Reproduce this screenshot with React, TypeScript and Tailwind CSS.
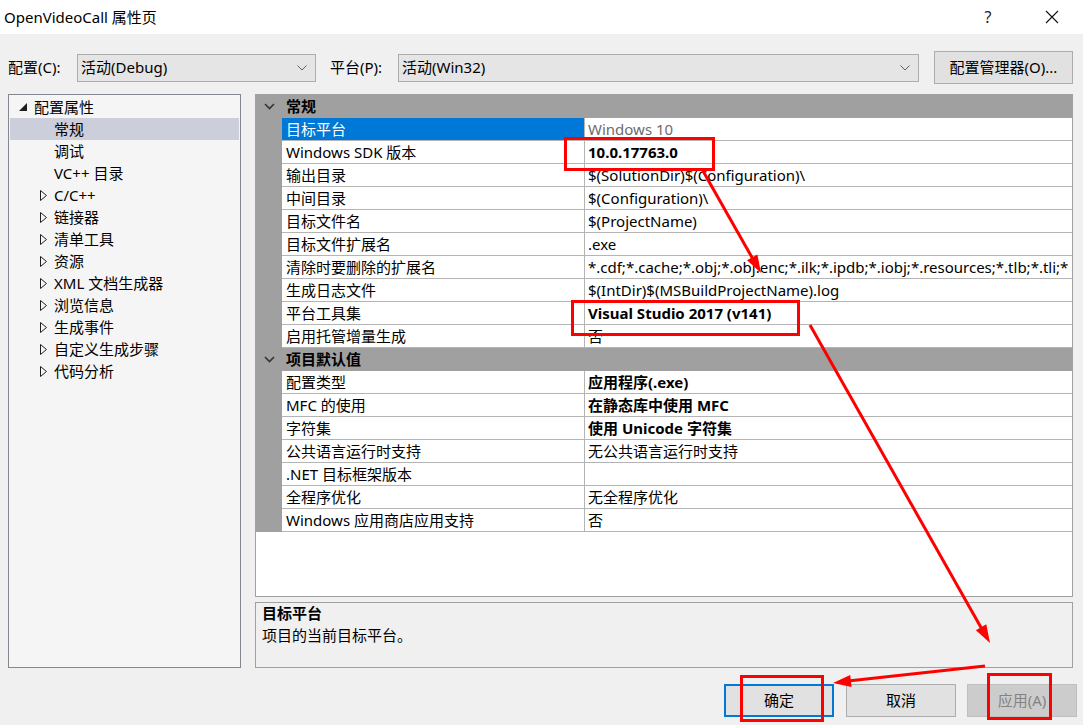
import React from "react"

const font = { fontFamily: '"Noto Sans", "Noto Sans CJK SC", sans-serif' }

type Row = { name: string; value: string; bold?: boolean; selected?: boolean; dim?: boolean }

const general: Row[] = [
  { name: "目标平台", value: "Windows 10", selected: true, dim: true },
  { name: "Windows SDK 版本", value: "10.0.17763.0", bold: true },
  { name: "输出目录", value: "$(SolutionDir)$(Configuration)\\" },
  { name: "中间目录", value: "$(Configuration)\\" },
  { name: "目标文件名", value: "$(ProjectName)" },
  { name: "目标文件扩展名", value: ".exe" },
  { name: "清除时要删除的扩展名", value: "*.cdf;*.cache;*.obj;*.obj.enc;*.ilk;*.ipdb;*.iobj;*.resources;*.tlb;*.tli;*" },
  { name: "生成日志文件", value: "$(IntDir)$(MSBuildProjectName).log" },
  { name: "平台工具集", value: "Visual Studio 2017 (v141)", bold: true },
  { name: "启用托管增量生成", value: "否" },
]

const defaults: Row[] = [
  { name: "配置类型", value: "应用程序(.exe)", bold: true },
  { name: "MFC 的使用", value: "在静态库中使用 MFC", bold: true },
  { name: "字符集", value: "使用 Unicode 字符集", bold: true },
  { name: "公共语言运行时支持", value: "无公共语言运行时支持" },
  { name: ".NET 目标框架版本", value: "" },
  { name: "全程序优化", value: "无全程序优化" },
  { name: "Windows 应用商店应用支持", value: "否" },
]

const tree: { label: string; level: 0 | 1; expandable?: boolean; selected?: boolean }[] = [
  { label: "配置属性", level: 0 },
  { label: "常规", level: 1, selected: true },
  { label: "调试", level: 1 },
  { label: "VC++ 目录", level: 1 },
  { label: "C/C++", level: 1, expandable: true },
  { label: "链接器", level: 1, expandable: true },
  { label: "清单工具", level: 1, expandable: true },
  { label: "资源", level: 1, expandable: true },
  { label: "XML 文档生成器", level: 1, expandable: true },
  { label: "浏览信息", level: 1, expandable: true },
  { label: "生成事件", level: 1, expandable: true },
  { label: "自定义生成步骤", level: 1, expandable: true },
  { label: "代码分析", level: 1, expandable: true },
]

function ComboArrow() {
  return (
    <svg width="10" height="6" viewBox="0 0 10 6" className="shrink-0">
      <polyline points="0.5,0.5 5,5 9.5,0.5" fill="none" stroke="#606060" strokeWidth="1" />
    </svg>
  )
}

function Combo({ text, w }: { text: string; w: string }) {
  return (
    <div className={`${w} shrink-0 h-[28px] border border-[#adadad] bg-[#e5e5e5] flex items-center justify-between pl-[3px] pr-[8px]`}>
      <span>{text}</span>
      <ComboArrow />
    </div>
  )
}

function Header({ title }: { title: string }) {
  return (
    <div className="h-[23px] bg-[#a0a0a0] flex items-center">
      <div className="w-[26px] flex justify-center">
        <svg width="11" height="7" viewBox="0 0 11 7">
          <polyline points="1,1 5.5,5.5 10,1" fill="none" stroke="#333" strokeWidth="1.6" />
        </svg>
      </div>
      <span className="pl-[4px] font-bold">{title}</span>
    </div>
  )
}

function PropRow({ r }: { r: Row }) {
  return (
    <div className="h-[23px] flex bg-[#a0a0a0]">
      <div className="w-[26px] shrink-0" />
      <div className="flex flex-1 border-b border-[#b4b4b4] bg-white min-w-0">
        <div className={`w-[303px] shrink-0 border-r border-[#b4b4b4] pl-[4px] flex items-center whitespace-nowrap ${r.selected ? "bg-[#0078d7] text-white" : ""}`}>
          {r.name}
        </div>
        <div className={`flex-1 min-w-0 pl-[3px] flex items-center whitespace-nowrap overflow-hidden ${r.bold ? "font-bold" : ""} ${r.dim ? "text-[#6d6d6d]" : ""}`}>
          {r.value}
        </div>
      </div>
    </div>
  )
}

export default function App() {
  return (
    <div className="relative w-[1083px] h-[725px] overflow-hidden bg-[#f0f0f0] text-[15px] text-black leading-none" style={font}>
      {/* title bar */}
      <div className="h-[34px] bg-white flex items-center">
        <span className="pl-[4px] flex-1">OpenVideoCall 属性页</span>
        <span className="w-[46px] text-center text-[16px] text-[#222]">?</span>
        <div className="w-[72px] flex justify-center pl-[10px]">
          <svg width="14" height="14" viewBox="0 0 14 14">
            <path d="M1 1 L13 13 M13 1 L1 13" stroke="#111" strokeWidth="1.1" />
          </svg>
        </div>
      </div>

      {/* config row */}
      <div className="mt-[17px] mb-[10px] h-[33px] flex items-center">
        <span className="w-[77px] shrink-0 pl-[8px]">配置(C):</span>
        <Combo text="活动(Debug)" w="w-[239px]" />
        <span className="w-[82px] shrink-0 pl-[14px]">平台(P):</span>
        <Combo text="活动(Win32)" w="w-[521px]" />
        <div className="ml-[15px] w-[139px] shrink-0 h-[33px] border border-[#adadad] bg-[#e1e1e1] flex items-center justify-center">
          配置管理器(O)...
        </div>
      </div>

      {/* main area */}
      <div className="flex pl-[8px] pr-[10px] gap-[14px] h-[574px]">
        <div className="w-[233px] shrink-0 border border-[#828790] bg-[#f5f5f5] pt-[1px]">
          {tree.map((t) => (
            <div key={t.label} className={`h-[22px] flex items-center mx-[1px] whitespace-nowrap ${t.selected ? "bg-[#cccedb]" : ""}`}>
              {t.level === 0 ? (
                <>
                  <svg width="9" height="9" viewBox="0 0 9 9" className="ml-[9px]">
                    <polygon points="8,0 8,8 0,8" fill="#1e1e1e" />
                  </svg>
                  <span className="ml-[6px]">{t.label}</span>
                </>
              ) : (
                <>
                  <div className="w-[44px] shrink-0 flex justify-end pr-[7px]">
                    {t.expandable && (
                      <svg width="7" height="11" viewBox="0 0 7 11">
                        <polygon points="0.5,0.5 6.5,5.5 0.5,10.5" fill="none" stroke="#1e1e1e" strokeWidth="1" />
                      </svg>
                    )}
                  </div>
                  <span>{t.label}</span>
                </>
              )}
            </div>
          ))}
        </div>

        <div className="flex-1 min-w-0 flex flex-col gap-[5px]">
          <div className="h-[503px] border border-[#a0a0a0] bg-white overflow-hidden">
            <Header title="常规" />
            {general.map((r) => <PropRow key={r.name} r={r} />)}
            <Header title="项目默认值" />
            {defaults.map((r) => <PropRow key={r.name} r={r} />)}
          </div>
          <div className="h-[66px] border border-[#a0a0a0] pl-[6px]">
            <div className="font-bold h-[20px] flex items-center">目标平台</div>
            <div className="h-[24px] flex items-center">项目的当前目标平台。</div>
          </div>
        </div>
      </div>

      {/* buttons */}
      <div className="mt-[16px] flex justify-end pr-[6px]">
        <div className="w-[110px] h-[33px] border-2 border-[#0078d7] bg-[#e1e1e1] flex items-center justify-center">确定</div>
        <div className="ml-[12px] w-[110px] h-[33px] border border-[#adadad] bg-[#e1e1e1] flex items-center justify-center">取消</div>
        <div className="ml-[11px] w-[110px] h-[33px] border border-[#bfbfbf] bg-[#cccccc] text-[#838383] flex items-center justify-center">应用(A)</div>
      </div>

      {/* red annotations */}
      <div className="absolute left-[564px] top-[137px] w-[151px] h-[34px] border-[3px] border-[#ff0000]" />
      <div className="absolute left-[571px] top-[300px] w-[229px] h-[36px] border-[3px] border-[#ff0000]" />
      <div className="absolute left-[740px] top-[675px] w-[84px] h-[47px] border-[3px] border-[#ff0000]" />
      <div className="absolute left-[987px] top-[673px] w-[65px] h-[47px] border-[3px] border-[#ff0000]" />
      <svg className="absolute left-0 top-0 pointer-events-none" width="1083" height="725" viewBox="0 0 1083 725">
        <g stroke="#ff0000" strokeWidth="3" fill="#ff0000">
          <line x1="703" y1="171" x2="754" y2="261" />
          <polygon points="761,273 747,260.2 757.4,254.4" stroke="none" />
          <line x1="810" y1="325" x2="983" y2="631" />
          <polygon points="990,643 975.9,630.3 986.3,624.3" stroke="none" />
          <line x1="985" y1="666" x2="848" y2="681" />
          <polygon points="833,683 850.2,675 851.6,687" stroke="none" />
        </g>
      </svg>
    </div>
  )
}
